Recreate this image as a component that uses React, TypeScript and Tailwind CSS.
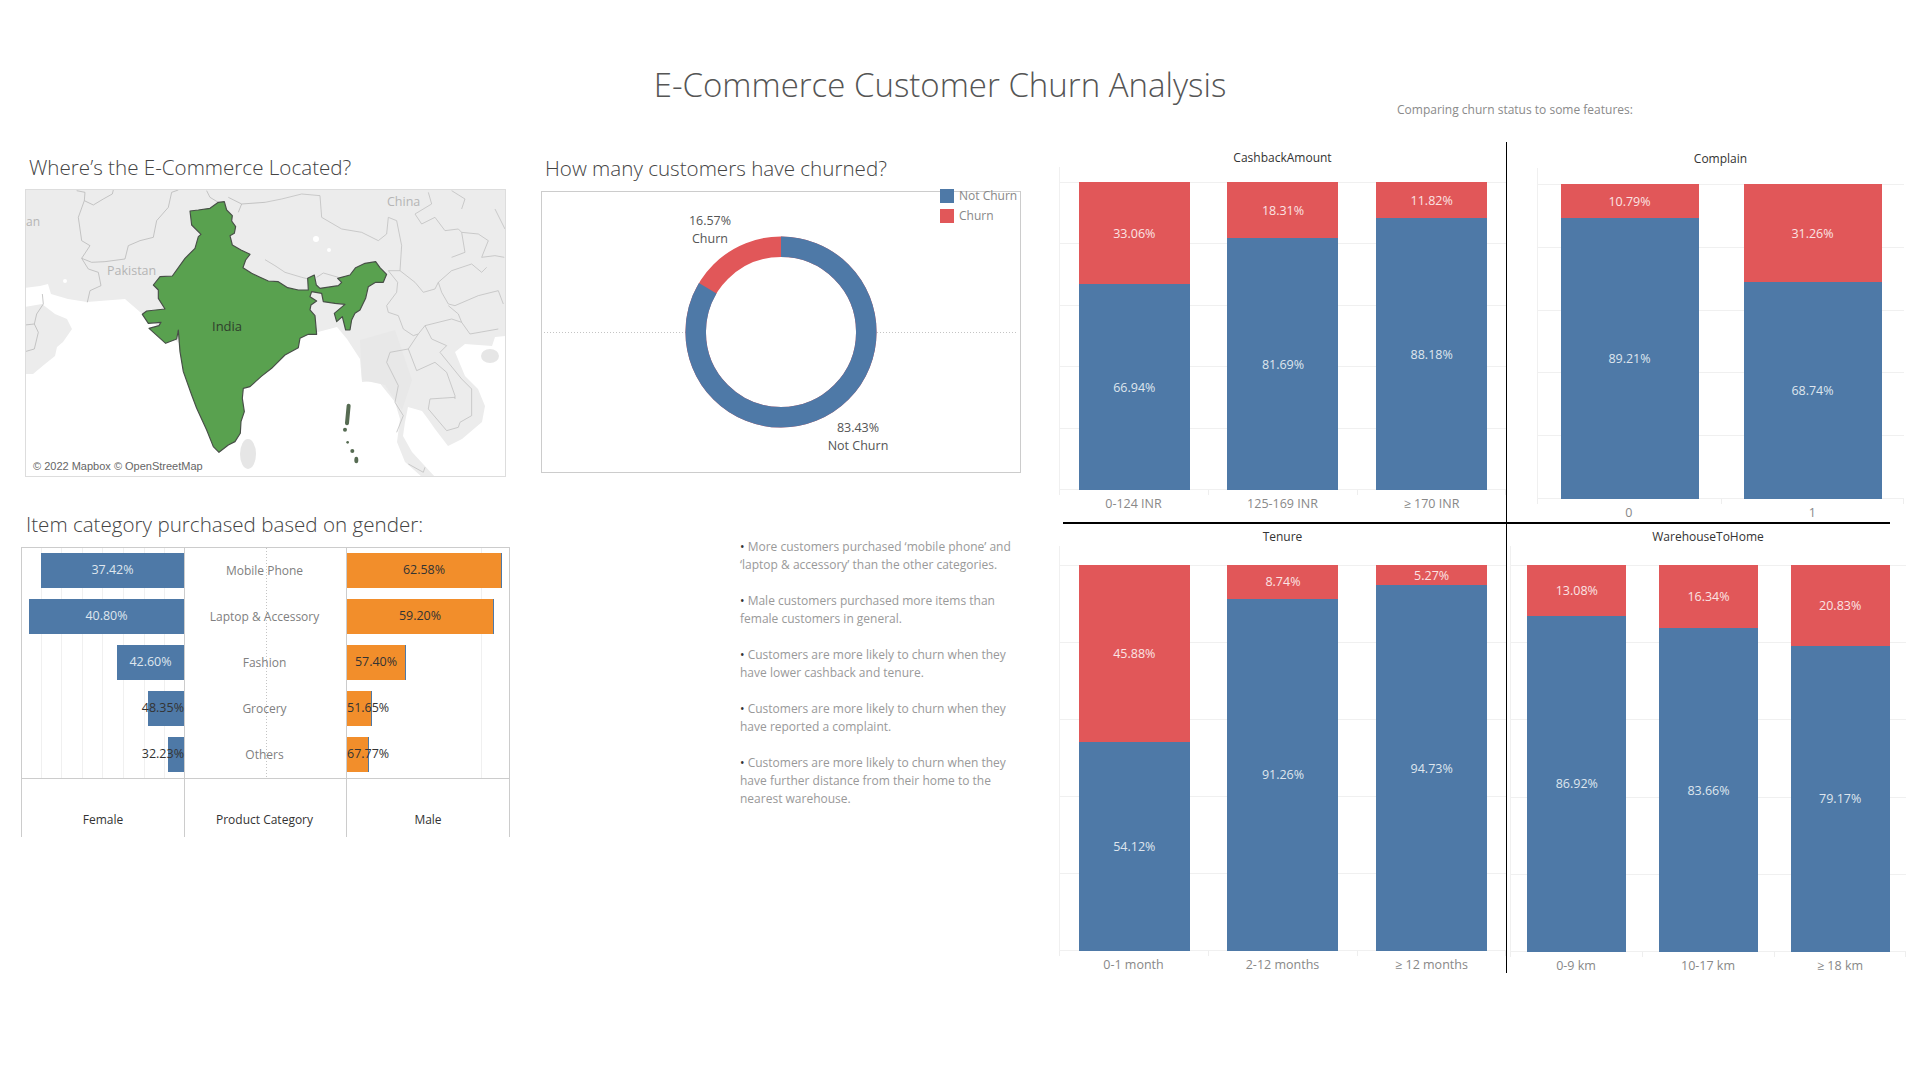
const BLUE = "#4e79a7";
const RED = "#e15759";

type Column = { label: string; churn: number };

const cashback: Column[] = [
  { label: "0-124 INR", churn: 33.06 },
  { label: "125-169 INR", churn: 18.31 },
  { label: "≥ 170 INR", churn: 11.82 },
];
const complain: Column[] = [
  { label: "0", churn: 10.79 },
  { label: "1", churn: 31.26 },
];
const tenure: Column[] = [
  { label: "0-1 month", churn: 45.88 },
  { label: "2-12 months", churn: 8.74 },
  { label: "≥ 12 months", churn: 5.27 },
];
const warehouse: Column[] = [
  { label: "0-9 km", churn: 13.08 },
  { label: "10-17 km", churn: 16.34 },
  { label: "≥ 18 km", churn: 20.83 },
];

const genderRows = [
  { name: "Mobile Phone", female: "37.42%", fw: 143, male: "62.58%", mw: 155, fClass: "text-[#dfe6ee] justify-center", mClass: "justify-center" },
  { name: "Laptop & Accessory", female: "40.80%", fw: 155, male: "59.20%", mw: 147, fClass: "text-[#dfe6ee] justify-center", mClass: "justify-center" },
  { name: "Fashion", female: "42.60%", fw: 67, male: "57.40%", mw: 59, fClass: "text-[#dfe6ee] justify-center", mClass: "justify-center" },
  { name: "Grocery", female: "48.35%", fw: 36, male: "51.65%", mw: 25, fClass: "text-[#333333] justify-end", mClass: "justify-start" },
  { name: "Others", female: "32.23%", fw: 16, male: "67.77%", mw: 22, fClass: "text-[#333333] justify-end", mClass: "justify-start" },
];

const notes = [
  ["More customers purchased ‘mobile phone’ and", "‘laptop & accessory’ than the other categories."],
  ["Male customers purchased more items than", "female customers in general."],
  ["Customers are more likely to churn when they", "have lower cashback and tenure."],
  ["Customers are more likely to churn when they", "have reported a complaint."],
  ["Customers are more likely to churn when they", "have further distance from their home to the", "nearest warehouse."],
];

const GRID_F = [19, 39, 60, 80, 101, 122, 142];

function pts(list: number[][]) {
  return list.map((p) => p.join(",")).join(" ");
}

const india = [
  [250,22],[268,20],[275,45],[292,62],[290,78],[302,95],[298,115],[285,122],[292,150],[318,165],[345,178],[332,195],[324,218],[350,235],[372,245],[400,258],[430,260],[458,278],[490,285],[520,285],[518,250],[538,240],[544,270],[555,280],[610,272],[620,262],[608,250],[645,240],[662,218],[690,205],[722,200],[735,218],[755,238],[745,262],[722,262],[700,275],[692,310],[675,345],[660,355],[650,375],[645,405],[632,405],[622,365],[605,380],[598,355],[630,328],[600,325],[565,320],[560,295],[530,290],[525,305],[545,318],[528,330],[525,345],[540,362],[545,418],[520,418],[495,430],[490,458],[450,480],[410,520],[378,545],[345,575],[325,580],[322,610],[328,650],[318,680],[316,715],[300,740],[280,750],[252,772],[235,755],[215,705],[185,640],[170,600],[145,530],[135,470],[130,405],[125,432],[92,445],[42,400],[72,392],[78,382],[40,385],[22,358],[35,348],[90,342],[70,310],[70,285],[55,270],[75,245],[112,243],[150,190],[180,160],[190,125],[198,118],[170,90],[165,48],[190,45],[225,40],
];

const land = [
  [25,288],[40,286],[48,284],[51,294],[68,299],[87,302],[125,299],[140,312],[200,360],[318,332],[337,327],[347,339],[360,359],[362,382],[378,381],[395,402],[400,419],[397,442],[405,462],[422,477],[435,477],[412,452],[403,436],[405,422],[408,407],[422,411],[428,419],[435,429],[448,446],[462,439],[482,422],[485,406],[478,389],[465,376],[455,352],[465,344],[492,346],[495,337],[506,336],[506,189],[25,189],
];

const arabia = [[25,307],[42,304],[55,314],[67,319],[72,329],[63,342],[57,347],[55,356],[45,364],[33,374],[25,374]];

const westBorders = [
  [[155,5],[180,10],[178,35],[205,48],[235,30],[262,15],[265,3]],
  [[178,35],[160,85],[170,155],[195,170],[170,208],[200,220],[240,218],[300,210],[310,170],[345,155],[385,145],[395,95],[430,55],[440,10],[460,3]],
  [[170,208],[190,240],[220,250],[228,290],[195,305],[187,340]],
  [[52,315],[55,345],[35,375],[28,405],[0,408]],
  [[28,405],[40,430],[28,480],[0,488]],
  [[545,5],[555,25],[580,40]],
  [[610,25],[650,45],[640,70]],
  [[650,45],[720,40]],
];

const eastBorders = [
  [[0,212],[30,230],[60,250],[110,265],[130,270]],
  [[155,265],[175,252],[220,265]],
  [[0,40],[50,30],[110,15],[165,20],[170,85],[230,120],[290,130],[340,155],[365,135],[370,85],[395,95],[410,170],[405,245],[370,245]],
  [[370,245],[398,280],[395,310],[365,350],[370,370],[400,380],[415,420],[445,440],[460,435]],
  [[405,245],[450,280],[475,310],[510,300],[520,280],[560,245],[620,225],[650,250],[665,235]],
  [[520,280],[530,310],[550,345],[570,350],[640,320],[700,305],[715,345]],
  [[550,350],[580,375],[590,400]],
  [[560,205],[600,190],[590,130],[640,135],[670,155],[650,205],[690,200],[718,205]],
  [[590,130],[580,120],[540,125],[510,85],[470,105],[450,75],[500,45],[490,10]],
  [[590,60],[600,30],[560,5]],
  [[690,60],[720,120]],
  [[460,435],[430,480],[375,490],[365,520],[400,590],[390,640],[415,680],[395,730]],
  [[430,480],[455,545],[510,520],[545,550],[570,620],[570,630]],
  [[460,435],[480,410],[560,390],[590,400],[615,435],[700,420]],
  [[480,410],[500,450],[545,470],[525,490],[590,570],[620,600],[620,680],[585,700],[580,715],[545,725],[490,660],[495,630],[570,625]],
  [[430,825],[475,850],[480,835]],
];

function MapPanel() {
  return (
    <div className="relative h-[288px] w-[481px] overflow-hidden border border-[#dddddd]">
      <svg className="block" width="479" height="286" viewBox="26 190 479 286">
        <rect x="25" y="189" width="481" height="288" fill="#ffffff" />
        <polygon points={pts(land)} fill="#ececec" />
        <polygon points={pts(arabia)} fill="#ececec" />
        <ellipse cx="248" cy="454" rx="8" ry="15" fill="#e6e6e6" />
        <ellipse cx="490" cy="356" rx="9" ry="7" fill="#e6e6e6" />
        <polygon points="360,340 395,330 412,380 402,410 385,385 362,380" fill="#e8e8e8" />
        <circle cx="65" cy="281" r="2" fill="#ffffff" />
        <circle cx="316" cy="239" r="3" fill="#ffffff" />
        <circle cx="329" cy="250" r="2" fill="#ffffff" />
        <g transform="translate(25 189) scale(0.3333)" fill="none" stroke="#b4b4b4" strokeWidth="2.2">
          {westBorders.map((b, i) => (
            <polyline key={i} points={pts(b)} />
          ))}
        </g>
        <g transform="translate(265 189) scale(0.3333)" fill="none" stroke="#bcbcbc" strokeWidth="2.2">
          {eastBorders.map((b, i) => (
            <polyline key={i} points={pts(b)} />
          ))}
        </g>
        <g transform="translate(135 195) scale(0.3333)">
          <polygon points={pts(india)} fill="#59a14f" stroke="#474f47" strokeWidth="3.5" strokeLinejoin="round" />
          <path d="M641 632 L636 685" stroke="#566b52" strokeWidth="12" strokeLinecap="round" />
          <circle cx="630" cy="704" r="6" fill="#566b52" />
          <circle cx="638" cy="742" r="4" fill="#566b52" />
          <circle cx="652" cy="768" r="6" fill="#566b52" />
          <ellipse cx="664" cy="795" rx="6" ry="10" fill="#566b52" />
        </g>
      </svg>
      <span className="absolute left-0 top-[23px] text-[12px] text-[#b5b5b5]">an</span>
      <span className="absolute left-[361px] top-[3px] text-[12.5px] text-[#b5b5b5]">China</span>
      <span className="absolute left-[81px] top-[72px] text-[12.5px] text-[#b5b5b5]">Pakistan</span>
      <span className="absolute left-[186px] top-[127px] text-[13px] text-[#2f3f2c]">India</span>
      <span className="absolute left-[3px] top-[269px] bg-white/60 px-[4px] font-['Liberation_Sans',sans-serif] text-[11px] leading-[14px] text-[#666666]">
        © 2022 Mapbox © OpenStreetMap
      </span>
    </div>
  );
}

function DonutPanel() {
  const r = 85.3;
  const c = 2 * Math.PI * r;
  const blue = c * 0.8343;
  return (
    <div className="relative flex h-[282px] w-[480px] items-center justify-center border border-[#cccccc]">
      <div className="absolute left-[2px] right-[2px] top-[140px] h-px bg-[repeating-linear-gradient(90deg,#c4c4c4_0_1px,transparent_1px_3px)]" />
      <svg className="relative" width="194" height="194" viewBox="0 0 194 194">
        <circle cx="97" cy="97" r="92" fill="#ffffff" />
        <g transform="rotate(-90 97 97)" fill="none" strokeWidth="20.5">
          <circle cx="97" cy="97" r={r} stroke={RED} />
          <circle cx="97" cy="97" r={r} stroke={BLUE} strokeDasharray={`${blue} ${c}`} />
        </g>
      </svg>
      <div className="absolute left-[398px] top-[-3px] flex flex-col gap-[6px] text-[12px] text-[#888888]">
        <div className="flex h-[14px] items-center gap-[5px]">
          <span className="h-[14px] w-[14px] bg-[#4e79a7]" />
          Not Churn
        </div>
        <div className="flex h-[14px] items-center gap-[5px]">
          <span className="h-[14px] w-[14px] bg-[#e15759]" />
          Churn
        </div>
      </div>
      <div className="absolute left-[128px] top-[20px] w-[80px] text-center text-[12.5px] leading-[18px] text-[#555555]">
        16.57%
        <br />
        Churn
      </div>
      <div className="absolute left-[276px] top-[227px] w-[80px] text-center text-[12.5px] leading-[18px] text-[#555555]">
        83.43%
        <br />
        Not Churn
      </div>
    </div>
  );
}

function GridLines({ items }: { items: number[] }) {
  return (
    <>
      {items.map((x) => (
        <div key={x} className="absolute bottom-0 top-0 w-px bg-[#f0f0f0]" style={{ left: x }} />
      ))}
    </>
  );
}

function GenderPanel() {
  return (
    <div className="flex w-[489px] border-r border-[#cccccc] text-[12.5px]">
      <div className="w-[163px] border-l border-[#cccccc]">
        <div className="relative flex h-[232px] flex-col items-end gap-[11px] border-b border-t border-[#cccccc] pt-[5px]">
          <GridLines items={GRID_F} />
          {genderRows.map((r) => (
            <div key={r.name} className={`relative flex h-[35px] items-center whitespace-nowrap bg-[#4e79a7] ${r.fClass}`} style={{ width: r.fw }}>
              {r.female}
            </div>
          ))}
        </div>
        <div className="flex h-[58px] items-end justify-center pb-[8px] text-[12px] font-medium text-[#333333]">Female</div>
      </div>
      <div className="w-[162px] border-l border-[#cccccc]">
        <div className="relative flex h-[232px] flex-col items-center gap-[11px] border-b border-t border-[#cccccc] pr-[2px] pt-[5px] text-[12px] text-[#808080]">
          <div className="absolute bottom-0 left-[81px] top-0 w-px bg-[repeating-linear-gradient(180deg,#c4c4c4_0_1px,transparent_1px_3px)]" />
          {genderRows.map((r) => (
            <div key={r.name} className="relative flex h-[35px] items-center whitespace-nowrap">
              {r.name}
            </div>
          ))}
        </div>
        <div className="flex h-[58px] items-end justify-center pb-[8px] pr-[2px] text-[12px] font-medium text-[#333333]">Product Category</div>
      </div>
      <div className="flex-1 border-l border-[#cccccc]">
        <div className="relative flex h-[232px] flex-col items-start gap-[11px] border-b border-t border-[#cccccc] pt-[5px] text-[#333333]">
          <GridLines items={[134]} />
          {genderRows.map((r) => (
            <div key={r.name} className={`relative flex h-[35px] items-center whitespace-nowrap border-r border-[#4e79a7] bg-[#f28e2b] ${r.mClass}`} style={{ width: r.mw }}>
              {r.male}
            </div>
          ))}
        </div>
        <div className="flex h-[58px] items-end justify-center pb-[8px] text-[12px] font-medium text-[#333333]">Male</div>
      </div>
    </div>
  );
}

function StackChart({
  title,
  columns,
  plotClass,
  barClass,
  colsClass,
  wrapClass,
}: {
  title: string;
  columns: Column[];
  plotClass: string;
  barClass: string;
  colsClass: string;
  wrapClass: string;
}) {
  return (
    <div className={wrapClass}>
      <h3 className="h-[16px] text-center text-[12px] leading-[16px] font-medium text-[#333333]">{title}</h3>
      <div className={`border-l border-[#f0f0f0] ${plotClass}`}>
        <div className="relative h-full">
          <div className="absolute inset-0 flex flex-col justify-between">
            {[0, 1, 2, 3, 4, 5].map((n) => (
              <div key={n} className="h-px bg-[#f0f0f0]" />
            ))}
          </div>
          <div className={`relative grid h-full ${colsClass}`}>
            {columns.map((col) => (
              <div key={col.label} className="flex justify-center">
                <div className={`flex h-full flex-col text-[12.5px] ${barClass}`}>
                  <div className="flex items-center justify-center bg-[#e15759] pt-[2px] text-[#fbe4e4]" style={{ height: `${col.churn}%` }}>
                    {col.churn.toFixed(2)}%
                  </div>
                  <div className="flex flex-1 items-center justify-center bg-[#4e79a7] pt-[2px] text-[#dfe6ee]">
                    {(100 - col.churn).toFixed(2)}%
                  </div>
                </div>
              </div>
            ))}
          </div>
        </div>
      </div>
      <div className={`grid h-[5px] ${colsClass}`}>
        {columns.map((col) => (
          <div key={col.label} className="border-l border-[#eeeeee] last:border-r" />
        ))}
      </div>
      <div className={`grid h-[18px] text-center text-[12.5px] leading-[18px] text-[#888888] ${colsClass}`}>
        {columns.map((col) => (
          <div key={col.label}>{col.label}</div>
        ))}
      </div>
    </div>
  );
}

export default function App() {
  return (
    <div className="h-[1080px] w-[1920px] overflow-hidden bg-white font-['Open_Sans',sans-serif]">
      <header className="h-[142px] pt-[62px]">
        <h1 className="h-[46px] pr-[40px] text-center text-[33px] leading-[46px] font-light text-[#555555]">E-Commerce Customer Churn Analysis</h1>
        <p className="ml-[1397px] mt-[-6px] text-[12px] leading-[16px] text-[#8a8a8a]">Comparing churn status to some features:</p>
      </header>

      <main className="flex">
        <section className="w-[520px] pl-[21px]">
          <h2 className="ml-[8px] mt-[10px] h-[30px] text-[20.6px] leading-[30px] font-light text-[#444444]">Where’s the E-Commerce Located?</h2>
          <div className="ml-[4px] mt-[7px]">
            <MapPanel />
          </div>
          <h2 className="ml-[5px] mt-[32px] h-[30px] text-[20.6px] leading-[30px] font-light text-[#444444]">Item category purchased based on gender:</h2>
          <div className="mt-[8px]">
            <GenderPanel />
          </div>
        </section>

        <section className="w-[539px] pl-[21px]">
          <h2 className="ml-[4px] mt-[11px] h-[30px] text-[20.6px] leading-[30px] font-light text-[#444444]">How many customers have churned?</h2>
          <div className="mt-[8px]">
            <DonutPanel />
          </div>
          <div className="ml-[199px] mt-[65px] flex flex-col gap-[18px] whitespace-nowrap text-[12px] leading-[18px] text-[#999999]">
            {notes.map((lines, i) => (
              <p key={i}>
                <span className="text-[#333333]">• </span>
                {lines.map((line, j) => (
                  <span key={j}>
                    {line}
                    <br />
                  </span>
                ))}
              </p>
            ))}
          </div>
        </section>

        <section className="w-[852px]">
          <div className="flex h-[380px]">
            <StackChart
              title="CashbackAmount"
              columns={cashback}
              wrapClass="w-[447px] pt-[8px]"
              plotClass="mt-[1px] h-[323px] pt-[15px]"
              barClass="w-[111px]"
              colsClass="grid-cols-3"
            />
            <div className="flex-1 border-l-[1.5px] border-black pl-[30px]">
              <StackChart
                title="Complain"
                columns={complain}
                wrapClass="w-[367px] pt-[9px]"
                plotClass="mt-[1px] h-[331px] pt-[16px]"
                barClass="w-[138px]"
                colsClass="grid-cols-2"
              />
            </div>
          </div>
          <div className="ml-[4px] h-[2px] w-[827px] bg-black" />
          <div className="flex h-[449px]">
            <StackChart
              title="Tenure"
              columns={tenure}
              wrapClass="w-[447px] pt-[5px]"
              plotClass="mt-[1px] h-[405px] pt-[19px]"
              barClass="w-[111px]"
              colsClass="grid-cols-3"
            />
            <div className="flex-1 border-l-[1.5px] border-black pl-[3px]">
              <StackChart
                title="WarehouseToHome"
                columns={warehouse}
                wrapClass="w-[396px] pt-[5px]"
                plotClass="mt-[1px] h-[406px] pt-[19px]"
                barClass="w-[99px]"
                colsClass="grid-cols-3"
              />
            </div>
          </div>
        </section>
      </main>
    </div>
  );
}
